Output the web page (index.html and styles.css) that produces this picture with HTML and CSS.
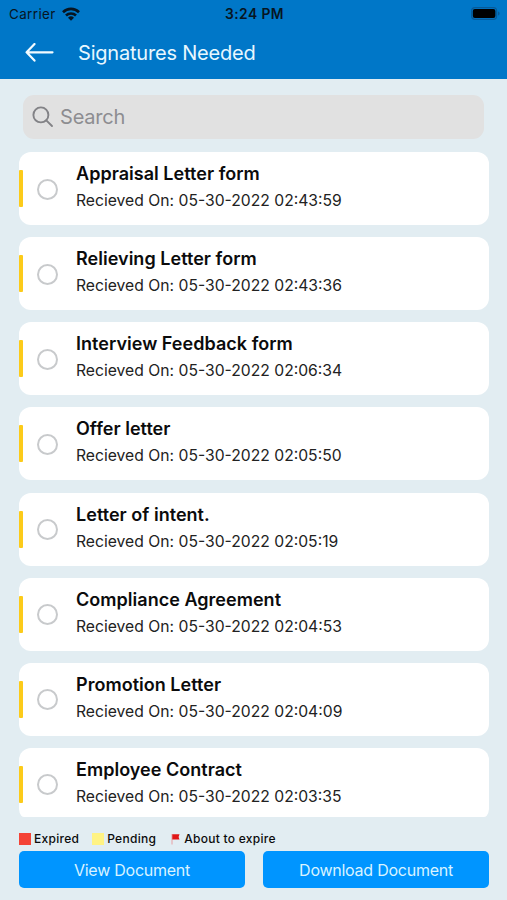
FILE: index.html
```html
<!DOCTYPE html>
<html lang="en">
<head>
  <meta charset="UTF-8" />
  <meta name="viewport" content="width=device-width, initial-scale=1" />
  <title>Signatures Needed</title>
  <link rel="stylesheet" href="styles.css">
</head>
<body>

  <header>
    <div class="status-bar">
      <div class="carrier">
        <span>Carrier</span>
        <svg class="wifi" width="18" height="14" viewBox="0 0 18 14" fill="none" stroke="#071522" stroke-width="2.6">
          <path d="M1 5.2a11.4 11.4 0 0 1 16 0" />
          <path d="M4 8.5a7.1 7.1 0 0 1 10 0" />
          <path d="M9 13.800 6 10.800a4.300 4.300 0 0 1 6 0z" fill="#071522" stroke="none" />
        </svg>
      </div>
      <span class="time">3:24 PM</span>
      <svg class="battery" width="29" height="13" viewBox="0 0 29 13">
        <rect x="0.6" y="0.6" width="25" height="11.8" rx="3.4" fill="none" stroke="#075a98" stroke-width="1.2" />
        <rect x="1.800" y="2" width="22.600" height="9" rx="2" fill="#000" />
        <path d="M27 4.500v4c1-.3 1.600-1 1.600-2s-.6-1.700-1.600-2z" fill="#075a98" />
      </svg>
    </div>
    <div class="nav-bar">
      <a href="#" class="back" aria-label="Back">
        <svg width="30" height="20" viewBox="0 0 30 20" fill="none" stroke="#f2fbff" stroke-width="2.2" stroke-linecap="round" stroke-linejoin="round">
          <path d="M27.500 9.300H2M9.500 1 1.600 9.300l7.900 8.300" />
        </svg>
      </a>
      <h1>Signatures Needed</h1>
    </div>
  </header>

  <main>
    <label class="search">
      <svg width="22" height="22" viewBox="0 0 22 22" fill="none" stroke="#828286" stroke-width="1.900" stroke-linecap="round">
        <circle cx="8.900" cy="8.900" r="7.500" />
        <path d="m14.300 14.300 5.700 5.700" />
      </svg>
      <input type="text" placeholder="Search">
    </label>

    <ul class="document-list">
      <li class="document">
        <span class="radio"></span>
        <div>
          <h2>Appraisal Letter form</h2>
          <p>Recieved On: 05-30-2022 02:43:59</p>
        </div>
      </li>
      <li class="document">
        <span class="radio"></span>
        <div>
          <h2>Relieving Letter form</h2>
          <p>Recieved On: 05-30-2022 02:43:36</p>
        </div>
      </li>
      <li class="document">
        <span class="radio"></span>
        <div>
          <h2>Interview Feedback form</h2>
          <p>Recieved On: 05-30-2022 02:06:34</p>
        </div>
      </li>
      <li class="document">
        <span class="radio"></span>
        <div>
          <h2>Offer letter</h2>
          <p>Recieved On: 05-30-2022 02:05:50</p>
        </div>
      </li>
      <li class="document">
        <span class="radio"></span>
        <div>
          <h2>Letter of intent.</h2>
          <p>Recieved On: 05-30-2022 02:05:19</p>
        </div>
      </li>
      <li class="document">
        <span class="radio"></span>
        <div>
          <h2>Compliance Agreement</h2>
          <p>Recieved On: 05-30-2022 02:04:53</p>
        </div>
      </li>
      <li class="document">
        <span class="radio"></span>
        <div>
          <h2>Promotion Letter</h2>
          <p>Recieved On: 05-30-2022 02:04:09</p>
        </div>
      </li>
      <li class="document">
        <span class="radio"></span>
        <div>
          <h2>Employee Contract</h2>
          <p>Recieved On: 05-30-2022 02:03:35</p>
        </div>
      </li>
    </ul>
  </main>

  <footer>
    <div class="legend">
      <span class="legend-item"><i class="swatch expired"></i>Expired</span>
      <span class="legend-item"><i class="swatch pending"></i>Pending</span>
      <span class="legend-item">
        <svg width="9" height="12" viewBox="0 0 9 12">
          <path d="M1 1v10.500" stroke="#e8a0a4" stroke-width="1" />
          <path d="M1.300 1.200H8.500L7.600 4l.9 2.600H1.300z" fill="#e01818" />
        </svg>
        About to expire
      </span>
    </div>
    <div class="actions">
      <button>View Document</button>
      <button>Download Document</button>
    </div>
  </footer>

</body>
</html>
```

FILE: styles.css
```css
* {
  box-sizing: border-box;
}

html, body {
  height: 100%;
  margin: 0;
  padding: 0;
}

body {
  display: flex;
  flex-direction: column;
  overflow: hidden;
  font-family: 'Inter', sans-serif;
  background-color: #e2edf2;
  color: #0b0b0c;
}

header {
  flex: none;
  height: 79px;
  background-color: #0077c8;
}

.status-bar {
  display: grid;
  grid-template-columns: 1fr auto 1fr;
  align-items: center;
  height: 27px;
  padding: 0 7px 0 9px;
  font-size: 13.4px;
  color: #071522;
}

.carrier {
  display: flex;
  align-items: center;
  gap: 6px;
  letter-spacing: 0.4px;
}

.time {
  font-weight: 600;
  font-size: 13.8px;
  letter-spacing: 0.45px;
}

.battery {
  justify-self: end;
}

.nav-bar {
  display: flex;
  align-items: center;
  gap: 23px;
  height: 51px;
  padding-left: 25px;
}

.back {
  display: flex;
}

h1 {
  margin: 0;
  font-size: 20px;
  font-weight: 400;
  letter-spacing: -0.2px;
  color: #e8f7ff;
}

main {
  flex: none;
  display: flex;
  flex-direction: column;
  gap: 13px;
  height: 738px;
  padding: 16px 18px 0 19px;
  overflow: hidden;
}

.search {
  flex: none;
  display: flex;
  align-items: center;
  gap: 6px;
  height: 44px;
  margin: 0 5px 0 4px;
  padding-left: 9px;
  border-radius: 11px;
  background-color: #e1e1e1;
}

.search input {
  flex: 1;
  padding: 0;
  border: none;
  outline: none;
  background: none;
  font-family: inherit;
  font-size: 20px;
  letter-spacing: -0.2px;
}

.search input::placeholder {
  color: #8d8d91;
}

.document-list {
  display: flex;
  flex-direction: column;
  gap: 12.15px;
  flex: 1;
  min-height: 0;
  margin: 0;
  padding: 0;
  list-style: none;
  overflow: hidden;
  border-radius: 0 0 5px 5px;
}

.document {
  flex: none;
  display: flex;
  align-items: center;
  height: 73px;
  border-radius: 12px;
  background-color: #fff;
}

.document::before {
  content: '';
  width: 4px;
  height: 37px;
  border-radius: 1px;
  background-color: #fccb1a;
}

.radio {
  width: 21px;
  height: 21px;
  margin: 1px 18px 0 14px;
  border: 2px solid #c8cacc;
  border-radius: 50%;
}

h2 {
  margin: 0 0 5px;
  font-size: 18px;
  font-weight: 600;
  line-height: 22px;
  letter-spacing: 0.03px;
}

.document p {
  margin: 0 0 3px;
  font-size: 15.7px;
  line-height: 21px;
  color: #222;
}

footer {
  padding: 15px 18px 0 19px;
}

.legend {
  display: flex;
  gap: 13px;
  height: 14px;
  font-size: 12px;
  font-weight: 500;
  line-height: 14px;
  letter-spacing: 0.28px;
}

.legend-item {
  display: flex;
  align-items: center;
  gap: 3px;
}

.legend-item svg {
  margin: 0 1px 0 2px;
}

.swatch {
  width: 12px;
  height: 12px;
}

.expired {
  background-color: #f44336;
}

.pending {
  background-color: #fff384;
}

.actions {
  display: grid;
  grid-template-columns: 1fr 1fr;
  gap: 18px;
  margin-top: 5px;
}

button {
  height: 37px;
  padding: 0;
  border: none;
  border-radius: 5px;
  background-color: #0095ff;
  color: #d9f3ff;
  font-family: inherit;
  font-size: 16px;
  letter-spacing: -0.25px;
}
```
